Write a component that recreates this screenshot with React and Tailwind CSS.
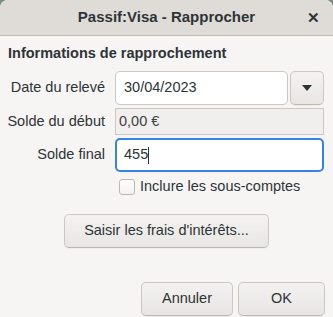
import { useState } from "react";

const btn =
  "flex items-center justify-center rounded-[5px] border border-[#cdc7c2] border-b-[#bfb8b1] bg-gradient-to-b from-[#f4f2f1] to-[#e8e6e3] text-[#2e3436] shadow-[0_1px_0_rgba(0,0,0,0.04)]";

const App = () => {
  const [sousComptes, setSousComptes] = useState(false);

  return (
    <div className="w-[333px] h-[317px] bg-[#7d8f7f] font-['Liberation_Sans',Arial,sans-serif] text-[14.5px] text-[#2e3436]">
      <div className="w-full h-full flex flex-col bg-[#f6f5f4] rounded-t-[8px] overflow-hidden">
        {/* title bar */}
        <div className="relative h-[36px] shrink-0 flex items-center justify-center bg-[#dfdcd8] border-b border-[#bfb8b1]">
          <span className="font-bold text-[15px]">Passif:Visa - Rapprocher</span>
          <span className="absolute right-[13px] top-[9px] text-[15px] font-bold leading-[18px]">✕</span>
        </div>

        <div className="flex flex-col px-[8px] pt-[7px]">
          <div className="font-bold h-[20px] leading-[20px]">Informations de rapprochement</div>

          <div className="grid grid-cols-[97px_1fr] gap-x-[10px] mt-[8px] pr-[1px] whitespace-nowrap">
            <div className="h-[34px] flex items-center justify-end">Date du relevé</div>
            <div className="flex gap-[2px]">
              <div className="flex-1 h-[34px] flex items-center px-[8px] bg-white border border-[#cdc7c2] rounded-[5px]">
                30/04/2023
              </div>
              <div className={btn + " w-[34px] h-[34px]"}>
                <svg width="12" height="8" viewBox="0 0 12 8">
                  <path d="M1 1h10L6 7z" fill="#2e3436" />
                </svg>
              </div>
            </div>

            <div className="h-[27px] mt-[3px] flex items-center justify-end">Solde du début</div>
            <div className="h-[27px] mt-[3px] flex items-center px-[3px] bg-[#f1efed] border border-[#cdc7c2] text-[#3d4244]">
              0,00 €
            </div>

            <div className="h-[34px] mt-[3px] flex items-center justify-end">Solde final</div>
            <div className="h-[34px] mt-[3px] flex items-center px-[7px] bg-white border-2 border-[#3584e4] rounded-[5px]">
              455<span className="w-px h-[17px] bg-[#2e3436]" />
            </div>

            <div />
            <label className="mt-[6px] h-[17px] flex items-center gap-[5px] pl-[4px] cursor-pointer">
              <span
                className="w-[16px] h-[16px] rounded-[3px] border border-[#bfb8b1] bg-gradient-to-b from-[#ffffff] to-[#f3f1ef]"
                onClick={() => setSousComptes(!sousComptes)}
              />
              <span>Inclure les sous-comptes</span>
            </label>
          </div>

          <div className="flex justify-center mt-[19px]">
            <div className={btn + " w-[205px] h-[34px]"}>Saisir les frais d'intérêts...</div>
          </div>

          <div className="flex justify-end gap-[5px] mt-[34px]">
            <div className={btn + " w-[92px] h-[34px]"}>Annuler</div>
            <div className={btn + " w-[87px] h-[34px]"}>OK</div>
          </div>
        </div>
      </div>
    </div>
  );
};

export default App;
